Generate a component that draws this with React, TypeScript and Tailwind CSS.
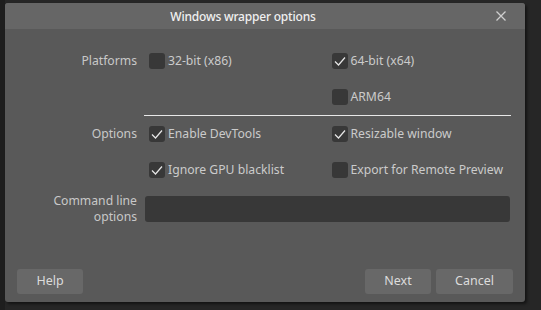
import React from "react";

const font = { fontFamily: '"Noto Sans", "Open Sans", Arial, sans-serif' };

function Check({ checked, label }: { checked: boolean; label: string }) {
  return (
    <div className="flex items-center gap-[3px] pl-[4px]">
      <div className="w-4 h-4 rounded-[3px] bg-[#383838] flex items-center justify-center">
        {checked && (
          <svg width="16" height="16" viewBox="0 0 16 16">
            <polyline points="3,8.5 6.5,12 13,4.5" fill="none" stroke="#e6e6e6" strokeWidth="1.2" />
          </svg>
        )}
      </div>
      <span className="text-[12.2px] text-[#cbcbcb] leading-4">{label}</span>
    </div>
  );
}

export default function App() {
  return (
    <div className="w-[541px] h-[310px] bg-[#262626] flex overflow-hidden" style={font}>
      <div className="w-[5px] bg-[#1e1e1e] shrink-0" />
      <div className="mt-[3px] w-[520px] h-[299px] bg-[#595959] rounded-[3px] flex flex-col shadow-[2px_2px_3px_rgba(0,0,0,0.5)]">
        <div className="h-[26px] bg-[#666666] rounded-t-[3px] flex items-center relative">
          <div className="w-full text-center pr-[44px] pt-[2px] text-[12px] tracking-[-0.2px] font-medium text-[#f0f0f0]">Windows wrapper options</div>
          <svg className="absolute left-[490px] top-[7px]" width="12" height="12" viewBox="0 0 12 12">
            <path d="M1.5 1.5 L10.5 10.5 M10.5 1.5 L1.5 10.5" stroke="#cfcfcf" strokeWidth="1.3" />
          </svg>
        </div>
        <div className="pt-[14px] flex flex-col">
          <div className="flex h-9 items-center">
            <div className="w-[132px] text-right text-[12.2px] text-[#c8c8c8]">Platforms</div>
            <div className="ml-2 w-[365px] grid grid-cols-2">
              <Check checked={false} label="32-bit (x86)" />
              <Check checked={true} label="64-bit (x64)" />
            </div>
          </div>
          <div className="flex h-9 items-center">
            <div className="w-[132px]" />
            <div className="ml-2 w-[365px] grid grid-cols-2">
              <div />
              <Check checked={false} label="ARM64" />
            </div>
          </div>
          <div className="flex">
            <div className="w-[139px]" />
            <div className="w-[367px] h-px bg-[#e8e8e8]" />
          </div>
          <div className="flex h-9 items-center">
            <div className="w-[132px] text-right text-[12.2px] text-[#c8c8c8]">Options</div>
            <div className="ml-2 w-[365px] grid grid-cols-2">
              <Check checked={true} label="Enable DevTools" />
              <Check checked={true} label="Resizable window" />
            </div>
          </div>
          <div className="flex h-9 items-center">
            <div className="w-[132px]" />
            <div className="ml-2 w-[365px] grid grid-cols-2">
              <Check checked={true} label="Ignore GPU blacklist" />
              <Check checked={false} label="Export for Remote Preview" />
            </div>
          </div>
          <div className="flex items-center mt-[5px]">
            <div className="w-[132px] text-right text-[12.2px] leading-4 text-[#c8c8c8]">
              Command line<br />options
            </div>
            <div className="ml-2 w-[365px] h-[26px] bg-[#383838] rounded-[3px]" />
          </div>
        </div>
        <div className="mt-auto mb-[8px] px-[12px] flex items-center">
          <button className="w-[66px] h-[25px] bg-[#686868] rounded-[3px] text-[12.5px] text-[#dcdcdc]">Help</button>
          <div className="flex-1" />
          <button className="w-[66px] h-[25px] bg-[#686868] rounded-[3px] text-[12.5px] text-[#dcdcdc]">Next</button>
          <button className="ml-[5px] w-[77px] h-[25px] bg-[#686868] rounded-[3px] text-[12.5px] text-[#dcdcdc]">Cancel</button>
        </div>
      </div>
    </div>
  );
}
